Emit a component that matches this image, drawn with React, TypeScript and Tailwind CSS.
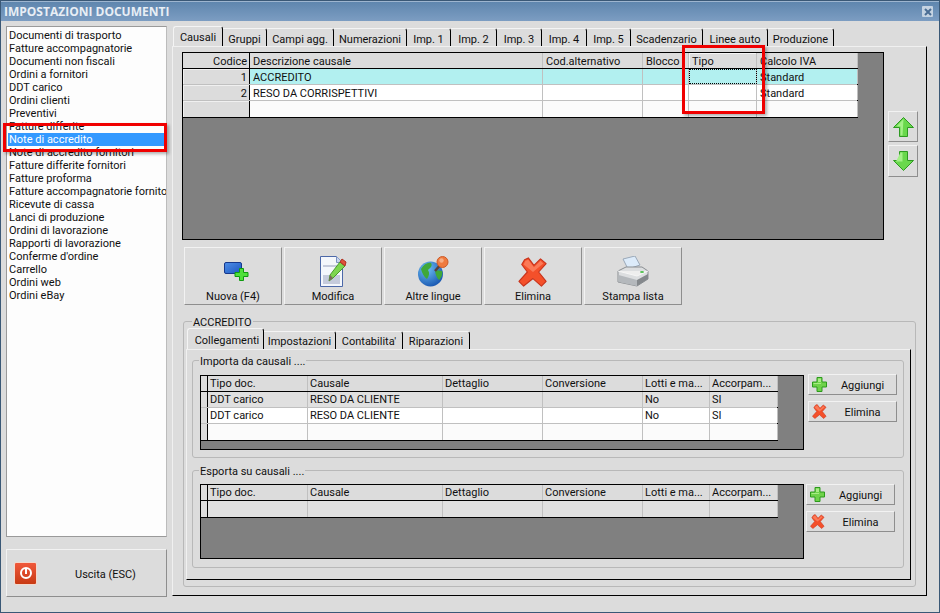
import React from "react";

const docs = [
  "Documenti di trasporto",
  "Fatture accompagnatorie",
  "Documenti non fiscali",
  "Ordini a fornitori",
  "DDT carico",
  "Ordini clienti",
  "Preventivi",
  "Fatture differite",
  "Note di accredito",
  "Note di accredito fornitori",
  "Fatture differite fornitori",
  "Fatture proforma",
  "Fatture accompagnatorie fornito",
  "Ricevute di cassa",
  "Lanci di produzione",
  "Ordini di lavorazione",
  "Rapporti di lavorazione",
  "Conferme d'ordine",
  "Carrello",
  "Ordini web",
  "Ordini eBay",
];

const topTabs = [
  ["Causali", 50],
  ["Gruppi", 44],
  ["Campi agg.", 67],
  ["Numerazioni", 73],
  ["Imp. 1", 44],
  ["Imp. 2", 46],
  ["Imp. 3", 45],
  ["Imp. 4", 45],
  ["Imp. 5", 44],
  ["Scadenzario", 72],
  ["Linee auto", 65],
  ["Produzione", 66],
] as const;

const subTabs = [
  ["Collegamenti", 77],
  ["Impostazioni", 72],
  ["Contabilita'", 67],
  ["Riparazioni", 67],
] as const;

function Tabs({ tabs, sub }: { tabs: readonly (readonly [string, number])[]; sub?: boolean }) {
  return (
    <div className={`flex items-end ${sub ? "h-[21px]" : "h-[20px]"}`}>
      {tabs.map(([label, w], i) => (
        <div
          key={label}
          style={{ width: w }}
          className={
            i === 0
              ? `flex h-full items-center justify-center rounded-t-[3px] border-t border-l border-r border-t-[#f4f4f4] border-l-[#f4f4f4] border-r-black ${sub ? "pt-[5px] pl-[3px]" : "pt-[4px]"}`
              : `flex h-[18px] items-center justify-center rounded-tr-[3px] border-t border-r border-t-[#f4f4f4] border-r-black ${sub ? "pt-[3px]" : "pt-[5px]"}`
          }
        >
          {label}
        </div>
      ))}
    </div>
  );
}

function Cell({ w, children, right, dark, bevel, main }: { w: number; children?: React.ReactNode; right?: boolean; dark?: boolean; bevel?: boolean; main?: boolean }) {
  return (
    <div
      style={{ width: w }}
      className={`h-full shrink-0 overflow-hidden whitespace-nowrap border-r leading-[15px] ${main ? "pt-[1px] pr-[2px] pl-[3px]" : "px-[2px]"} ${dark ? "border-black" : "border-[#c0c0c0]"} ${right ? "text-right" : ""} ${bevel ? "shadow-[inset_1px_1px_0_#f4f4f4]" : ""}`}
    >
      {children}
    </div>
  );
}

function MainGrid() {
  const cols = [67, 293, 100, 46, 68, 101];
  const head = ["Codice", "Descrizione causale", "Cod.alternativo", "Blocco", "Tipo", "Calcolo IVA"];
  const rows = [
    { bg: "bg-[#b2f0f0]", cells: ["1", "ACCREDITO", "", "", "", "Standard"] },
    { bg: "bg-white", cells: ["2", "RESO DA CORRISPETTIVI", "", "", "", "Standard"] },
    { bg: "bg-[#fbfbfb]", cells: ["", "", "", "", "", ""] },
  ];
  return (
    <div className="h-[188px] w-[702px] shrink-0 border border-black bg-[#808080]">
      <div className="w-[675px] border-r border-b border-black">
        <div className="flex h-[16px] border-b border-black bg-[#dcdcdc]">
          {head.map((t, i) => (
            <Cell key={t} w={cols[i]} right={i === 0} dark={i === 0} bevel={i === 4} main>
              {t}
            </Cell>
          ))}
        </div>
        {rows.map((r, ri) => (
          <div key={ri} className={`flex h-[16px] border-b border-[#c0c0c0] last:border-b-0 ${r.bg}`}>
            {r.cells.map((c, i) => (
              <div
                key={i}
                style={{ width: cols[i] }}
                className={`h-full shrink-0 overflow-hidden whitespace-nowrap border-r pt-[1px] pr-[2px] pl-[3px] leading-[15px] ${
                  i === 0 ? "border-r-black bg-[#dcdcdc] text-right shadow-[inset_1px_1px_0_#f0f0f0]" : "border-r-[#c0c0c0]"
                } ${ri === 0 && i === 4 ? "outline-1 -outline-offset-1 outline-dotted outline-black" : ""}`}
              >
                {c}
              </div>
            ))}
          </div>
        ))}
      </div>
    </div>
  );
}

const subCols = [7, 100, 135, 100, 100, 67, 68];
const subHead = ["", "Tipo doc.", "Causale", "Dettaglio", "Conversione", "Lotti e ma...", "Accorpam..."];

function SubGrid({ rows }: { rows: { bg: string; cells: string[] }[] }) {
  return (
    <div className="h-[75px] w-[604px] shrink-0 border border-black bg-[#808080]">
      <div className="w-[577px] border-r border-b border-black">
        <div className="flex h-[16px] border-b border-black bg-[#dcdcdc]">
          {subHead.map((t, i) => (
            <Cell key={i} w={subCols[i]} dark={i === 0}>
              {t}
            </Cell>
          ))}
        </div>
        {rows.map((r, ri) => (
          <div key={ri} className={`flex h-[16px] border-b border-[#c0c0c0] last:border-b-0 ${r.bg}`}>
            {subHead.map((_, i) => (
              <div
                key={i}
                style={{ width: subCols[i] }}
                className={`h-full shrink-0 overflow-hidden whitespace-nowrap border-r px-[2px] leading-[15px] ${
                  i === 0 ? "border-r-black bg-[#dcdcdc]" : "border-r-[#c0c0c0]"
                }`}
              >
                {i === 0 ? "" : r.cells[i - 1]}
              </div>
            ))}
          </div>
        ))}
      </div>
    </div>
  );
}

const raised = "border border-t-[#f2f2f2] border-l-[#f2f2f2] border-r-[#8e8e8e] border-b-[#8e8e8e] bg-[#dcdcdc]";

function PlusIcon() {
  return (
    <svg width="15" height="15" viewBox="0 0 15 15">
      <path d="M5 .5h5v4.5h4.5v5H10v4.5H5V10H.5V5H5z" fill="#6fd24a" stroke="#2c9a1c" />
      <path d="M6 1.5h3V5H6zM1.5 6H9v1H1.5z" fill="#a9ec86" />
    </svg>
  );
}

function CrossIcon({ size = 15 }: { size?: number }) {
  return (
    <svg width={size} height={size} viewBox="0 0 32 32">
      <path
        d="M7 3 L11 1 L17 9 L24 2 L30 7 L22 16 L30 26 L25 31 L16 23 L6 31 L1 26 L10 16 L4 8z"
        fill="#f4502a"
        stroke="#c8321a"
        strokeWidth="1.2"
        strokeLinejoin="round"
      />
      <path d="M8 4 L11 3 L17 11 L24 4 L27 7 L16 16 L6 8z" fill="#fb7a58" />
    </svg>
  );
}

function SmallBtn({ kind, label }: { kind: "add" | "del"; label: string }) {
  return (
    <div className={`flex h-[21px] w-[89px] items-center pl-[3px] ${raised}`}>
      <span className="flex w-[16px] shrink-0">{kind === "add" ? <PlusIcon /> : <CrossIcon />}</span>
      <span className="flex-1 pt-[4px] pl-[1px] text-center">{label}</span>
    </div>
  );
}

function Legend({ children }: { children: React.ReactNode }) {
  return <span className="ml-[6px] bg-[#dcdcdc] px-[1px] leading-[13px]">{children}</span>;
}

function NewIcon() {
  return (
    <svg width="25" height="19" viewBox="0 0 25 19" className="ml-[6px]">
      <defs>
        <linearGradient id="nb" x1="0" y1="0" x2="1" y2="1">
          <stop offset="0" stopColor="#4f8fe8" />
          <stop offset="1" stopColor="#1c56c0" />
        </linearGradient>
      </defs>
      <rect x=".5" y=".5" width="17" height="11" rx="1.5" fill="url(#nb)" stroke="#16388c" />
      <path d="M15.5 6.5h4v4h4.5v4h-4.5v4h-4v-4H11v-4h4.5z" fill="#4fe03a" stroke="#0f9a10" />
    </svg>
  );
}

function EditIcon() {
  return (
    <svg width="27" height="31" viewBox="0 0 27 31">
      <path d="M.5.5h16l6 6v24H.5z" fill="#f4f7fc" stroke="#4c68a8" />
      <path d="M16.5.5v6h6" fill="#c9d6ee" stroke="#7a90c0" />
      <rect x="3" y="9" width="17" height="2" fill="#c5cbdc" />
      <rect x="3" y="19" width="17" height="9" fill="#c5cbdc" />
      <path d="M9 25l1-6L20 6l5 4L13 22z" fill="#7ed650" stroke="#4a9a2c" />
      <path d="M9 25l1-6 3 3z" fill="#7a6a5a" />
      <path d="M20 6l2-3 4 3-1 4z" fill="#e0503a" stroke="#b03020" />
    </svg>
  );
}

function GlobeIcon() {
  return (
    <svg width="31" height="31" viewBox="0 0 31 31">
      <defs>
        <radialGradient id="gl" cx="0.35" cy="0.3" r="0.85">
          <stop offset="0" stopColor="#6fc0f4" />
          <stop offset="1" stopColor="#0c48a8" />
        </radialGradient>
      </defs>
      <circle cx="12.5" cy="18" r="12.5" fill="url(#gl)" />
      <path d="M3 13c3-5 7-7 10-6 2 3-1 5-3 7 2 3 1 6-1 9-3-2-5-6-6-10z" fill="#3fa83a" />
      <path d="M17 14l7 1c1 4-1 7-3 9-2-2-4-6-4-10z" fill="#3fa83a" />
      <path d="M17 15l7-8" stroke="#5a4038" strokeWidth="2.5" />
      <circle cx="24.5" cy="6" r="5.5" fill="#ef7a3e" stroke="#cc5a28" />
      <circle cx="23.5" cy="4.5" r="2.2" fill="#f6ad84" />
    </svg>
  );
}

function PrinterIcon() {
  return (
    <svg width="32" height="31" viewBox="0 0 32 31">
      <path d="M6 3l12-3 5 9-12 4z" fill="#dcebfa" stroke="#9aa8b8" />
      <path d="M1 15l8-4h16l6 4v8l-11 7-19-4z" fill="#dcdee0" stroke="#8a8e92" />
      <path d="M1 15l19 5 11-5" fill="#eeeeee" stroke="#f6f6f6" />
      <path d="M1.5 19l18.5 5v6L1.5 26z" fill="#b4b8bc" />
      <path d="M20 24l11-6v5l-11 7z" fill="#84888c" />
      <ellipse cx="25" cy="16" rx="2" ry="1" fill="#4fc04f" />
    </svg>
  );
}

function ArrowIcon({ down }: { down?: boolean }) {
  return (
    <svg width="21" height="20" viewBox="0 0 21 20">
      <path
        d={down ? "M6.5.5h8v9h6L10.5 19.5.5 9.5h6z" : "M10.5.5l10 10h-6v9h-8v-9h-6z"}
        fill="#69d84c"
        stroke="#2e9a22"
        strokeLinejoin="round"
      />
      <path d={down ? "M7.5 1.5h2v9H3z" : "M10.5 2l-7 7.5h4v9h2z"} fill="#a4f088" />
    </svg>
  );
}

const actions = [
  { label: "Nuova (F4)", icon: <NewIcon /> },
  { label: "Modifica", icon: <EditIcon /> },
  { label: "Altre lingue", icon: <GlobeIcon /> },
  { label: "Elimina", icon: <CrossIcon size={30} /> },
  { label: "Stampa lista", icon: <PrinterIcon /> },
];

export default function App() {
  return (
    <div className="relative flex h-[613px] w-[940px] flex-col overflow-hidden border border-[#3a5876] bg-[#dcdcdc] font-['Roboto','Noto_Sans',sans-serif] text-[11px] text-[#101010]">
      {/* title bar */}
      <div className="flex h-[20px] shrink-0 items-center justify-between border-t border-t-[#9db5cf] bg-gradient-to-b from-[#5f86ae] to-[#7c9dc2] pr-[6px] pl-[3px]">
        <span className="font-['Open_Sans',sans-serif] text-[12px] font-bold text-[#e8eef5]">IMPOSTAZIONI DOCUMENTI</span>
        <span className="flex h-[11px] w-[11px] items-center justify-center rounded-[1px] bg-[#c5d3e2]">
          <svg width="8" height="8" viewBox="0 0 8 8">
            <path d="M1 1l6 6M7 1L1 7" stroke="#4a6d94" strokeWidth="2" />
          </svg>
        </span>
      </div>

      <div className="flex flex-1 pt-[5px] pr-[12px] pl-[5px]">
        {/* left column */}
        <div className="flex w-[161px] shrink-0 flex-col">
          <div className="h-[511px] border border-t-[#9a9a9a] border-l-[#9a9a9a] border-r-[#bcbcbc] border-b-[#9a9a9a] bg-[#fdfdfd] pt-[2px] pl-[1px]">
            {docs.map((d, i) => (
              <div
                key={d}
                className={`h-[13px] overflow-hidden whitespace-nowrap pl-[1px] leading-[13px] ${i === 8 ? "mr-[1px] bg-[#3399ff] text-white" : ""}`}
              >
                {d}
              </div>
            ))}
          </div>
          <div className={`mt-[12px] flex h-[48px] items-center pl-[7px] ${raised}`}>
            <span className="flex h-[23px] w-[23px] shrink-0 items-center justify-center rounded-[2px] border border-[#f4d8cc] bg-gradient-to-b from-[#f0583a] to-[#c83a12]">
              <svg width="14" height="14" viewBox="0 0 14 14">
                <circle cx="7" cy="7" r="5" fill="none" stroke="#fff" strokeWidth="2" />
                <rect x="6" y="3" width="2" height="5" fill="#fff" />
              </svg>
            </span>
            <span className="mt-[4px] ml-[38px]">Uscita (ESC)</span>
          </div>
        </div>

        {/* right column */}
        <div className="ml-[5px] flex w-[755px] shrink-0 flex-col">
          <div className="ml-[1px]">
            <Tabs tabs={topTabs} />
          </div>
          <div className="flex h-[550px] flex-col border border-t-[#f0f0f0] border-l-[#f0f0f0] border-r-black border-b-black pt-[5px] pl-[9px]">
            <div className="flex">
              <MainGrid />
              <div className="mt-[59px] ml-[4px] flex w-[30px] flex-col gap-[3px]">
                <div className={`flex h-[31px] items-center justify-center ${raised}`}>
                  <ArrowIcon />
                </div>
                <div className={`flex h-[32px] items-center justify-center ${raised}`}>
                  <ArrowIcon down />
                </div>
              </div>
            </div>

            <div className="mt-[7px] ml-[2px] flex gap-[2px]">
              {actions.map((a) => (
                <div key={a.label} className={`flex h-[58px] w-[98px] flex-col items-center ${raised}`}>
                  <span className="flex h-[42px] shrink-0 items-center justify-center pt-[5px]">{a.icon}</span>
                  <span className="leading-[13px]">{a.label}</span>
                </div>
              ))}
            </div>

            {/* fieldset ACCREDITO */}
            <div className="mt-[16px] ml-[1px] flex h-[266px] w-[733px] flex-col rounded-[3px] border border-[#b8b8b8] pl-[2px]">
              <div className="-mt-[7px] h-[13px] shrink-0">
                <Legend>ACCREDITO</Legend>
              </div>
              <div className="ml-[1px]">
                <Tabs tabs={subTabs} sub />
              </div>
              <div className="flex h-[231px] w-[725px] flex-col border border-t-[#f0f0f0] border-l-[#f0f0f0] border-r-black border-b-black pt-[10px] pl-[5px]">
                <div className="flex h-[98px] w-[712px] shrink-0 flex-col rounded-[3px] border border-[#b8b8b8] pl-[7px]">
                  <div className="-mt-[7px] -ml-[7px] h-[13px] shrink-0">
                    <Legend>Importa da causali ....</Legend>
                  </div>
                  <div className="mt-[8px] flex items-start">
                    <SubGrid
                      rows={[
                        { bg: "bg-[#e0e0e0]", cells: ["DDT carico", "RESO DA CLIENTE", "", "", "No", "SI"] },
                        { bg: "bg-white", cells: ["DDT carico", "RESO DA CLIENTE", "", "", "No", "SI"] },
                        { bg: "bg-[#fbfbfb]", cells: ["", "", "", "", "", ""] },
                      ]}
                    />
                    <div className="-mt-[1px] ml-[4px] flex flex-col gap-[6px]">
                      <SmallBtn kind="add" label="Aggiungi" />
                      <SmallBtn kind="del" label="Elimina" />
                    </div>
                  </div>
                </div>
                <div className="mt-[12px] flex h-[98px] w-[712px] shrink-0 flex-col rounded-[3px] border border-[#b8b8b8] pl-[7px]">
                  <div className="-mt-[7px] -ml-[7px] h-[13px] shrink-0">
                    <Legend>Esporta su causali ....</Legend>
                  </div>
                  <div className="mt-[7px] flex items-start">
                    <SubGrid rows={[{ bg: "bg-[#e0e0e0]", cells: ["", "", "", "", "", ""] }]} />
                    <div className="ml-[2px] flex flex-col gap-[6px]">
                      <SmallBtn kind="add" label="Aggiungi" />
                      <SmallBtn kind="del" label="Elimina" />
                    </div>
                  </div>
                </div>
              </div>
            </div>
          </div>
        </div>
      </div>

      {/* red callouts drawn over the screenshot */}
      <div className="absolute top-[122px] left-[2px] h-[29px] w-[164px] border-[3px] border-[#f00000] shadow-[2px_2px_3px_rgba(0,0,0,0.3)]" />
      <div className="absolute top-[44px] left-[681px] h-[69px] w-[83px] border-[3px] border-[#f00000] shadow-[2px_2px_3px_rgba(0,0,0,0.3)]" />
    </div>
  );
}
